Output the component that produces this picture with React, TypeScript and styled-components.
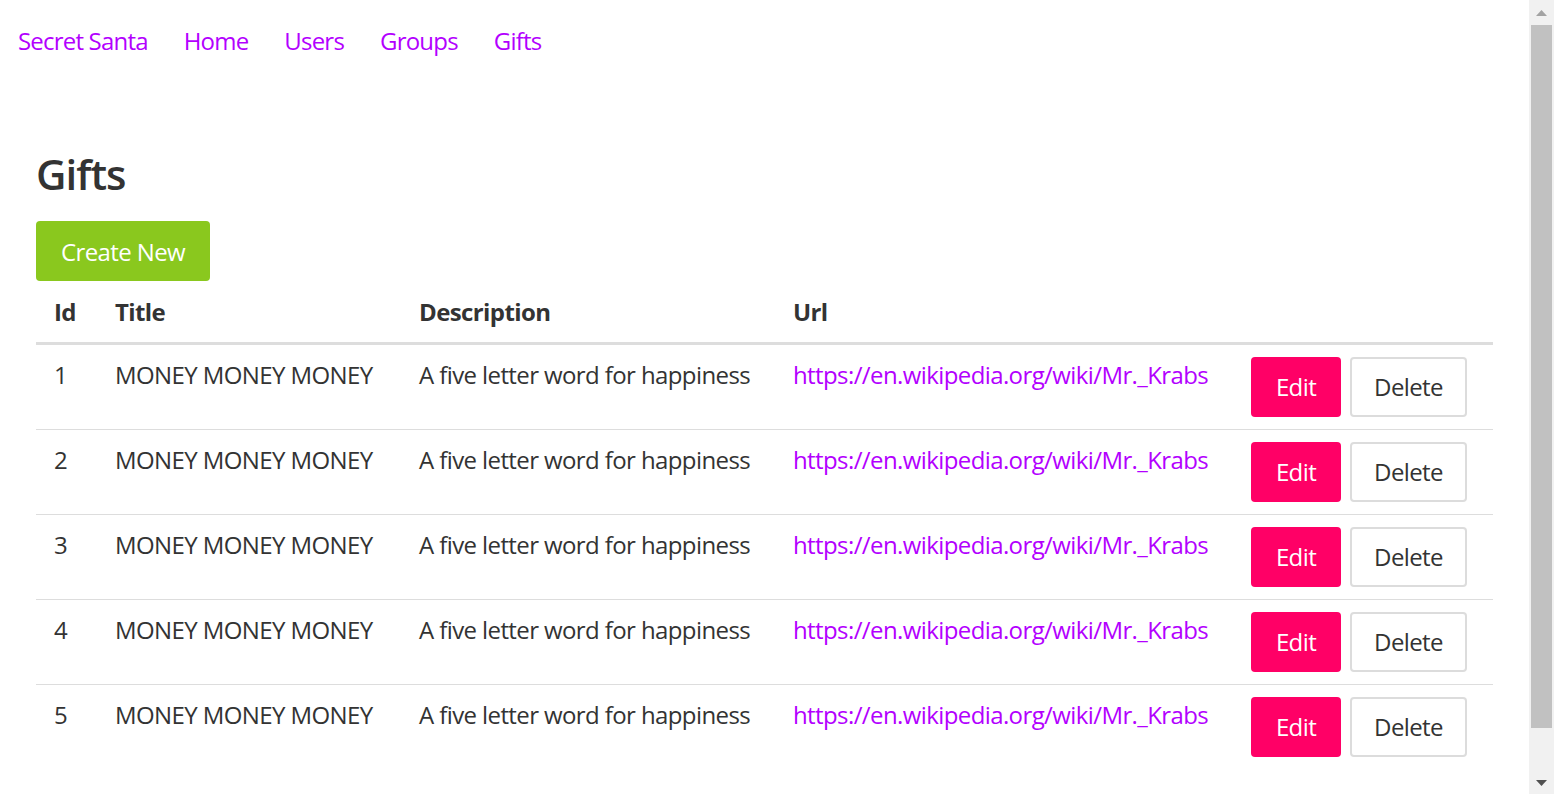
import React from "react";
import styled, { createGlobalStyle } from "styled-components";

const GlobalStyle = createGlobalStyle`
  html, body {
    margin: 0;
    padding: 0;
    background: #ffffff;
  }
  body {
    font-family: "Open Sans", "Noto Sans", "Liberation Sans", sans-serif;
    font-size: 24px;
    letter-spacing: -0.6px;
    color: #333333;
  }
`;

const Page = styled.div`
  padding-right: 25px;
  box-sizing: border-box;
`;

const Nav = styled.nav`
  display: flex;
  padding-top: 23px;
`;

const NavLink = styled.a`
  padding: 0 18px;
  line-height: 36px;
  font-size: 24px;
  letter-spacing: -0.8px;
  color: #b300ff;
  text-decoration: none;
`;

const Main = styled.main`
  padding: 0 36px;
`;

const Heading = styled.h1`
  margin: 90px 0 22px 0;
  font-size: 42px;
  line-height: 50px;
  font-weight: 600;
  letter-spacing: -1px;
  color: #333333;
`;

const Button = styled.a<{ $variant: "create" | "edit" | "delete"; $w: number }>`
  display: inline-flex;
  align-items: center;
  justify-content: center;
  box-sizing: border-box;
  width: ${(p) => p.$w}px;
  height: 60px;
  border-radius: 4px;
  font-size: 24px;
  text-decoration: none;
  cursor: pointer;
  color: ${(p) => (p.$variant === "delete" ? "#333333" : "#ffffff")};
  background: ${(p) =>
    p.$variant === "create" ? "#8ac81e" : p.$variant === "edit" ? "#ff0066" : "#ffffff"};
  border: ${(p) => (p.$variant === "delete" ? "2px solid #dcdcdc" : "none")};
`;

const Table = styled.table`
  width: 100%;
  margin-top: 1px;
  table-layout: fixed;
  border-collapse: separate;
  border-spacing: 0;
`;

const Th = styled.th`
  padding: 12px 18px;
  line-height: 36px;
  text-align: left;
  font-weight: 700;
  font-size: 24px;
  border-bottom: 3px solid #dddddd;
`;

const Tr = styled.tr`
  & + & > td {
    border-top: 1px solid #dddddd;
  }
`;

const Td = styled.td`
  padding: 12px 18px;
  line-height: 36px;
  vertical-align: top;
  font-size: 24px;
  white-space: nowrap;
`;

const UrlLink = styled.a`
  color: #b300ff;
  text-decoration: none;
`;

const Actions = styled.div`
  display: flex;
  gap: 9px;
`;

/* Drawn window scrollbar that sits over the right edge of the page */
const ScrollBar = styled.div`
  position: fixed;
  top: 0;
  right: 0;
  width: 25px;
  height: 100vh;
  background: #f1f1f1;
  display: flex;
  flex-direction: column;
  align-items: center;
`;

const ArrowBox = styled.div<{ $h: number }>`
  height: ${(p) => p.$h}px;
  display: flex;
  align-items: center;
  justify-content: center;
`;

const Thumb = styled.div`
  width: 21px;
  height: 703px;
  background: #c1c1c1;
`;

const Spacer = styled.div`
  flex: 1;
`;

const gifts = [1, 2, 3, 4, 5].map((id) => ({
  id,
  title: "MONEY MONEY MONEY",
  description: "A five letter word for happiness",
  url: "https://en.wikipedia.org/wiki/Mr._Krabs",
}));

export default function App() {
  return (
    <Page>
      <GlobalStyle />
      <Nav>
        <NavLink href="#">Secret Santa</NavLink>
        <NavLink href="#">Home</NavLink>
        <NavLink href="#">Users</NavLink>
        <NavLink href="#">Groups</NavLink>
        <NavLink href="#">Gifts</NavLink>
      </Nav>
      <Main>
        <Heading>Gifts</Heading>
        <Button $variant="create" $w={174}>Create New</Button>
        <Table>
          <colgroup>
            <col style={{ width: 61 }} />
            <col style={{ width: 304 }} />
            <col style={{ width: 374 }} />
            <col style={{ width: 458 }} />
            <col />
          </colgroup>
          <thead>
            <tr>
              <Th>Id</Th>
              <Th>Title</Th>
              <Th>Description</Th>
              <Th>Url</Th>
              <Th></Th>
            </tr>
          </thead>
          <tbody>
            {gifts.map((g) => (
              <Tr key={g.id}>
                <Td>{g.id}</Td>
                <Td>{g.title}</Td>
                <Td>{g.description}</Td>
                <Td>
                  <UrlLink href="#">{g.url}</UrlLink>
                </Td>
                <Td>
                  <Actions>
                    <Button $variant="edit" $w={90}>Edit</Button>
                    <Button $variant="delete" $w={117}>Delete</Button>
                  </Actions>
                </Td>
              </Tr>
            ))}
          </tbody>
        </Table>
      </Main>
      <ScrollBar>
        <ArrowBox $h={25}>
          <svg width="11" height="6" viewBox="0 0 11 6">
            <polygon points="5.5,0 11,6 0,6" fill="#a3a3a3" />
          </svg>
        </ArrowBox>
        <Thumb />
        <Spacer />
        <ArrowBox $h={23}>
          <svg width="11" height="6" viewBox="0 0 11 6">
            <polygon points="0,0 11,0 5.5,6" fill="#505050" />
          </svg>
        </ArrowBox>
      </ScrollBar>
    </Page>
  );
}
